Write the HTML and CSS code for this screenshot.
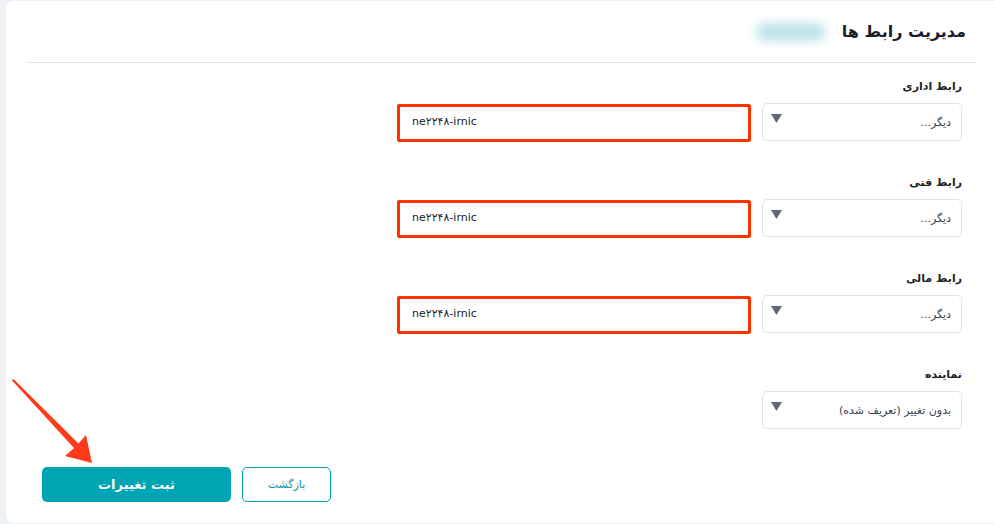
FILE: index.html
```html
<!DOCTYPE html>
<html lang="fa" dir="rtl">
<head>
    <meta charset="UTF-8">
    <meta name="viewport" content="width=device-width, initial-scale=1.0">
    <title>مدیریت رابط ها</title>
    <link rel="stylesheet" href="styles.css">
</head>
<body>
    <div class="card">
        <!-- Page header with domain name -->
        <div class="card-header">
            <h1 class="title">مدیریت رابط ها</h1>
            <span class="domain-name"></span>
        </div>

        <div class="form">
            <div class="field">
                <div class="field-label">رابط اداری</div>
                <div class="field-row">
                    <div class="select">
                        <span class="select-text">دیگر...</span>
                        <svg class="select-arrow" width="11" height="9" viewBox="0 0 11 9"><path d="M0 0h11L5.5 9z"/></svg>
                    </div>
                    <input class="handle-input" type="text" dir="ltr" value="ne۲۲۴۸-irnic">
                </div>
            </div>

            <div class="field">
                <div class="field-label">رابط فنی</div>
                <div class="field-row">
                    <div class="select">
                        <span class="select-text">دیگر...</span>
                        <svg class="select-arrow" width="11" height="9" viewBox="0 0 11 9"><path d="M0 0h11L5.5 9z"/></svg>
                    </div>
                    <input class="handle-input" type="text" dir="ltr" value="ne۲۲۴۸-irnic">
                </div>
            </div>

            <div class="field">
                <div class="field-label">رابط مالی</div>
                <div class="field-row">
                    <div class="select">
                        <span class="select-text">دیگر...</span>
                        <svg class="select-arrow" width="11" height="9" viewBox="0 0 11 9"><path d="M0 0h11L5.5 9z"/></svg>
                    </div>
                    <input class="handle-input" type="text" dir="ltr" value="ne۲۲۴۸-irnic">
                </div>
            </div>

            <div class="field">
                <div class="field-label">نماینده</div>
                <div class="field-row">
                    <div class="select">
                        <span class="select-text">بدون تغییر (تعریف شده)</span>
                        <svg class="select-arrow" width="11" height="9" viewBox="0 0 11 9"><path d="M0 0h11L5.5 9z"/></svg>
                    </div>
                </div>
            </div>

            <div class="actions">
                <button class="btn btn-outline">بازگشت</button>
                <button class="btn btn-primary">ثبت تغییرات</button>
            </div>
        </div>
    </div>

    <!-- Pointer arrow towards the save button -->
    <svg class="pointer" width="120" height="480" viewBox="0 0 120 480">
        <polygon points="12,380.5 74,448 65,456 92,463 86,435 78.5,443.5 13.5,379" fill="#ff3b1c"/>
    </svg>
</body>
</html>
```

FILE: styles.css
```css
/* Reset margin for body */
body {
    margin: 0;
    background-color: #eef1f6;
    font-family: "DejaVu Sans", "Noto Sans", sans-serif;
    color: #222;
    overflow: hidden;
}

.card {
    margin: 1px 0 0 6px;
    height: 522px;
    box-sizing: border-box;
    background-color: #fff;
    border-radius: 8px 0 0 8px;
}

/* Header with title and a blurred domain */
.card-header {
    display: flex;
    align-items: center;
    height: 61px;
    margin: 0 17px 0 21px;
    padding-right: 11px;
    border-bottom: 1px solid #e4e4e4;
}

.title {
    margin: 0;
    font-size: 16px;
    font-weight: bold;
    color: #1b1d2a;
}

.domain-name {
    width: 70px;
    height: 18px;
    margin-right: 16px;
    background-color: #bfe3ea;
    border-radius: 9px;
    filter: blur(5px);
}

.form {
    padding: 14px 32px 0 36px;
}

.field {
    margin-bottom: 31px;
}

.field-label {
    font-size: 11px;
    font-weight: bold;
    line-height: 20px;
    margin-bottom: 6px;
    color: #222;
}

.field-row {
    display: flex;
    align-items: flex-start;
    gap: 11px;
}

/* Dropdown look-alike */
.select {
    width: 200px;
    height: 38px;
    box-sizing: border-box;
    display: flex;
    align-items: center;
    justify-content: space-between;
    padding: 0 10px 0 8px;
    border: 1px solid #e2e2e2;
    border-radius: 5px;
    background-color: #fff;
}

.select-text {
    font-size: 11px;
    color: #34404f;
}

.select-arrow {
    align-self: flex-start;
    margin-top: 10px;
    fill: #5f6873;
}

.handle-input {
    width: 354px;
    height: 38px;
    margin-top: 1px;
    box-sizing: border-box;
    padding: 0 0 4px 12px;
    border: 3px solid #ff3300;
    border-radius: 2px;
    font-family: "DejaVu Sans", sans-serif;
    font-size: 11px;
    color: #222;
    outline: none;
}

.actions {
    display: flex;
    justify-content: flex-end;
    gap: 11px;
    margin-top: 38px;
}

.btn {
    height: 35px;
    border-radius: 5px;
    font-family: "DejaVu Sans", sans-serif;
    cursor: pointer;
}

.btn-primary {
    width: 189px;
    background-color: #00a5b4;
    border: none;
    color: #fff;
    font-size: 13px;
    font-weight: bold;
}

.btn-outline {
    width: 89px;
    background-color: #fff;
    border: 1px solid #00a5b4;
    color: #0096a5;
    font-size: 11px;
}

.pointer {
    position: absolute;
    top: 0;
    left: 0;
}
```
